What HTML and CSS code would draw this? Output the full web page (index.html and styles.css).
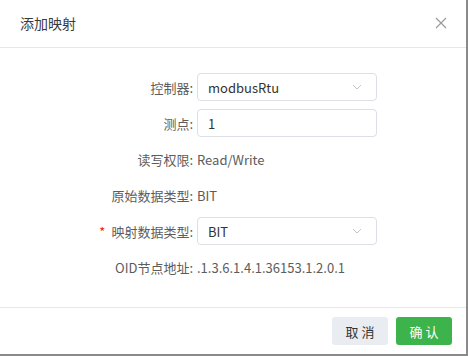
FILE: index.html
```html
<!DOCTYPE html>
<html lang="zh">
<head>
<meta charset="utf-8">
<link rel="stylesheet" href="styles.css">
</head>
<body>
<div class="dialog">
  <div class="header">
    <span class="title">添加映射</span>
    <svg class="close" width="12" height="12" viewBox="0 0 12 12"><path d="M1 1 L11 11 M11 1 L1 11" stroke="#9a9a9a" stroke-width="1.2" fill="none"/></svg>
  </div>
  <div class="body">
    <div class="row">
      <div class="label">控制器:</div>
      <div class="field select"><span>modbusRtu</span><svg width="10" height="6" viewBox="0 0 10 6"><path d="M1 1 L5 5 L9 1" stroke="#c0c4cc" stroke-width="1" fill="none"/></svg></div>
    </div>
    <div class="row">
      <div class="label">测点:</div>
      <div class="field"><span>1</span></div>
    </div>
    <div class="row">
      <div class="label">读写权限:</div>
      <div class="value">Read/Write</div>
    </div>
    <div class="row">
      <div class="label">原始数据类型:</div>
      <div class="value">BIT</div>
    </div>
    <div class="row">
      <div class="label"><span class="req">*</span>映射数据类型:</div>
      <div class="field select"><span>BIT</span><svg width="10" height="6" viewBox="0 0 10 6"><path d="M1 1 L5 5 L9 1" stroke="#c0c4cc" stroke-width="1" fill="none"/></svg></div>
    </div>
    <div class="row">
      <div class="label">OID节点地址:</div>
      <div class="value">.1.3.6.1.4.1.36153.1.2.0.1</div>
    </div>
  </div>
  <div class="footer">
    <button class="btn cancel">取 消</button>
    <button class="btn ok">确 认</button>
  </div>
</div>
</body>
</html>
```

FILE: styles.css
```css
* { box-sizing: border-box; }
html, body { margin: 0; padding: 0; }
body {
  background: #8a8a8a;
  width: 468px;
  height: 356px;
  font-family: "Noto Sans CJK SC", "Noto Sans", sans-serif;
}
.dialog {
  width: 466px;
  height: 354px;
  background: #fff;
  display: flex;
  flex-direction: column;
}
.header {
  height: 48px;
  border-bottom: 1px solid #e8e8e8;
  display: flex;
  align-items: center;
  justify-content: space-between;
  padding: 0 19px 2px 20px;
}
.title {
  font-size: 14px;
  color: #3a3a3a;
}
.close { display: block; }
.body {
  flex: 1;
  padding-top: 25px;
}
.row {
  display: flex;
  align-items: center;
  height: 28px;
  margin-bottom: 8px;
  font-size: 13px;
}
.label {
  width: 197px;
  padding-right: 4px;
  text-align: right;
  color: #5c5c5c;
}
.req {
  color: #f5222d;
  margin-right: 6px;
}
.value { color: #5c5c5c; }
.field {
  width: 180px;
  height: 28px;
  border: 1px solid #dcdfe6;
  border-radius: 4px;
  padding: 0 14px 0 10px;
  display: flex;
  align-items: center;
  justify-content: space-between;
  color: #333;
}
.field svg { display: block; }
.footer {
  height: 47px;
  border-top: 1px solid #e8e8e8;
  display: flex;
  align-items: center;
  justify-content: flex-end;
  gap: 8px;
  padding-right: 14px;
}
.btn {
  width: 56px;
  height: 28px;
  border: none;
  border-radius: 3px;
  font-family: "Noto Sans CJK SC", sans-serif;
  font-size: 13px;
  padding: 0;
}
.cancel { background: #e9ecf0; color: #333; }
.ok { background: #3db34b; color: #fff; }
```
